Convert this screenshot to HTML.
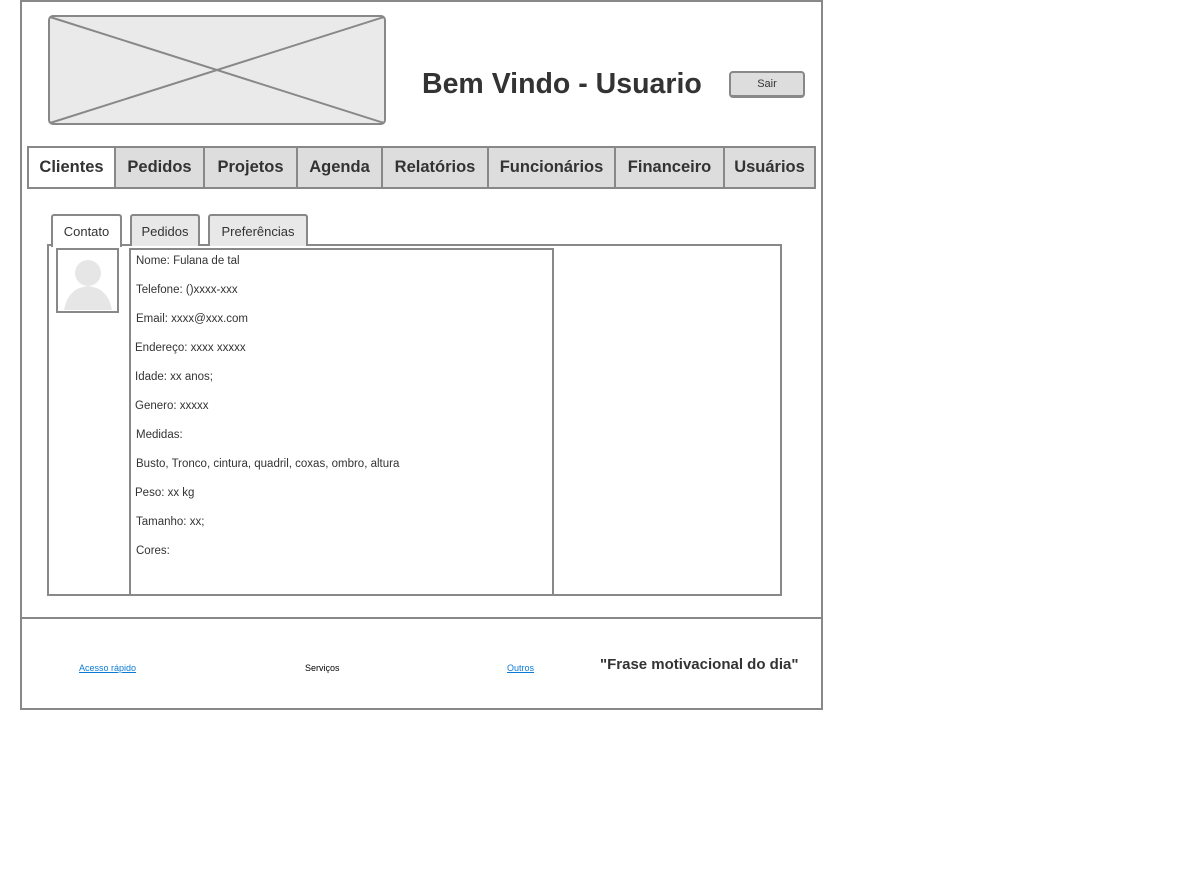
<!DOCTYPE html>
<html><head><meta charset="utf-8"><style>
*{box-sizing:border-box;margin:0;padding:0}
body{width:1198px;height:882px;background:#fff;font-family:"Liberation Sans",sans-serif;color:#333;position:relative;overflow:hidden}
.a{position:absolute}
.nav{position:absolute;top:146px;height:43px;border:2px solid #888;background:#ddd;font-weight:bold;font-size:16.5px;display:flex;align-items:center;justify-content:center;color:#333}
.tab{position:absolute;top:214px;height:32px;border:2px solid #888;border-bottom:none;border-radius:3px 3px 0 0;background:#e8e8e8;font-size:13px;display:flex;align-items:center;justify-content:center}
.ln{position:absolute;left:136px;font-size:11.5px;color:#333}
</style></head><body>
<div class="a" style="left:20px;top:0;width:803px;height:710px;border:2px solid #888"></div>
<div class="a" style="left:20px;top:617px;width:803px;height:2px;background:#888"></div>
<svg class="a" style="left:48px;top:15px" width="338" height="110"><rect x="1" y="1" width="336" height="108" rx="4" fill="#eaeaea" stroke="#888" stroke-width="2"/><line x1="2" y1="2" x2="336" y2="108" stroke="#888" stroke-width="2"/><line x1="336" y1="2" x2="2" y2="108" stroke="#888" stroke-width="2"/></svg>
<div class="a" style="left:422px;top:68px;font-size:28.5px;font-weight:bold;color:#333">Bem Vindo - Usuario</div>
<div class="a" style="left:729px;top:71px;width:76px;height:27px;border:2px solid #888;border-bottom-width:3px;border-radius:4px;background:#ddd;font-size:11px;display:flex;align-items:center;justify-content:center">Sair</div>
<div class="nav" style="left:27px;width:89px;background:#fff">Clientes</div>
<div class="nav" style="left:114px;width:91px">Pedidos</div>
<div class="nav" style="left:203px;width:95px">Projetos</div>
<div class="nav" style="left:296px;width:87px">Agenda</div>
<div class="nav" style="left:381px;width:108px">Relatórios</div>
<div class="nav" style="left:487px;width:129px">Funcionários</div>
<div class="nav" style="left:614px;width:111px">Financeiro</div>
<div class="nav" style="left:723px;width:93px">Usuários</div>
<div class="a" style="left:47px;top:244px;width:735px;height:352px;border:2px solid #888"></div>
<div class="tab" style="left:51px;width:71px;background:#fff;height:33px">Contato</div>
<div class="tab" style="left:130px;width:70px">Pedidos</div>
<div class="tab" style="left:208px;width:100px">Preferências</div>
<div class="a" style="left:129px;top:248px;width:425px;height:348px;border:2px solid #888"></div>
<svg class="a" style="left:56px;top:248px" width="63" height="65"><rect x="1" y="1" width="61" height="63" fill="#fff" stroke="#888" stroke-width="2"/><circle cx="32" cy="25" r="13" fill="#e6e6e6"/><path d="M8 62 Q12 40 32 38 Q52 40 56 62 Z" fill="#e6e6e6"/></svg>
<div class="ln" style="top:255px">Nome: Fulana de tal</div>
<div class="ln" style="top:284px">Telefone: ()xxxx-xxx</div>
<div class="ln" style="top:313px">Email: xxxx@xxx.com</div>
<div class="ln" style="top:342px;left:135px">Endereço: xxxx xxxxx</div>
<div class="ln" style="top:371px;left:135px">Idade: xx anos;</div>
<div class="ln" style="top:400px;left:135px">Genero: xxxxx</div>
<div class="ln" style="top:429px">Medidas:</div>
<div class="ln" style="top:458px">Busto, Tronco, cintura, quadril, coxas, ombro, altura</div>
<div class="ln" style="top:487px;left:135px">Peso: xx kg</div>
<div class="ln" style="top:516px">Tamanho: xx;</div>
<div class="ln" style="top:545px">Cores:</div>
<div class="a" style="left:79px;top:663px;font-size:9px;color:#0a7ad6;text-decoration:underline">Acesso rápido</div>
<div class="a" style="left:305px;top:663px;font-size:9px;color:#000">Serviços</div>
<div class="a" style="left:507px;top:663px;font-size:9px;color:#0a7ad6;text-decoration:underline">Outros</div>
<div class="a" style="left:600px;top:656px;font-size:15px;font-weight:bold;color:#333">"Frase motivacional do dia"</div>
</body></html>
